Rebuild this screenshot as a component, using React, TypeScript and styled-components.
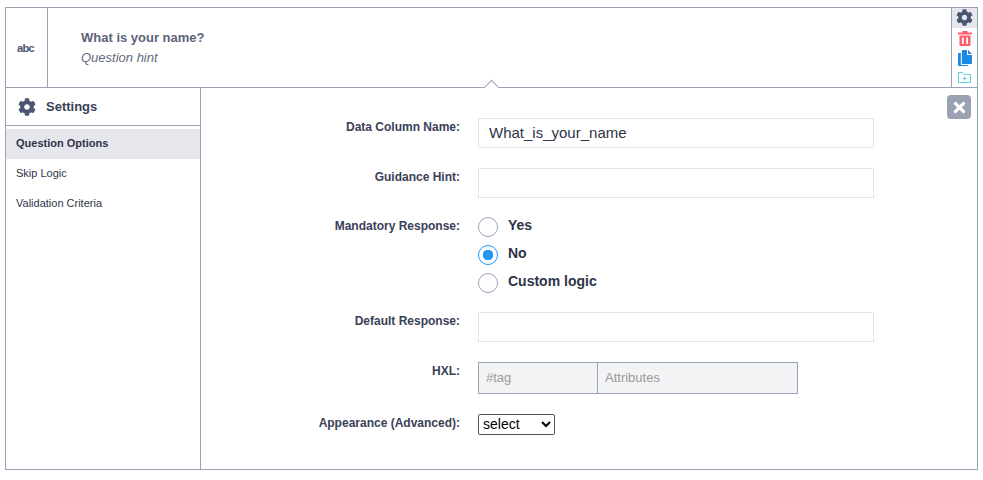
import React from "react";
import styled, { createGlobalStyle } from "styled-components";
import { FaCog, FaTimes } from "react-icons/fa";

const GlobalStyle = createGlobalStyle`
  html, body {
    margin: 0;
    background: #fff;
    font-family: "Liberation Sans", Arial, sans-serif;
  }
`;

const menuItems = ["Question Options", "Skip Logic", "Validation Criteria"];
const radioOptions = [
  { label: "Yes", checked: false },
  { label: "No", checked: true },
  { label: "Custom logic", checked: false },
];

const TrashIcon = () => (
  <svg width="14" height="15" viewBox="0 0 14 15" fill="currentColor">
    <path d="M4.5 0h5v1.5H14v2H0v-2h4.5z" />
    <path
      fillRule="evenodd"
      d="M1.5 4.5h11V14a1 1 0 0 1-1 1h-9a1 1 0 0 1-1-1zM4 6.5V13h1.7V6.5zM8.3 6.5V13H10V6.5z"
    />
  </svg>
);

const CopyIcon = () => (
  <svg width="14" height="16" viewBox="0 0 14 16" fill="currentColor">
    <path d="M4.8 0H9v5h5v8a1 1 0 0 1-1 1H4.8a1 1 0 0 1-1-1V1a1 1 0 0 1 1-1z" />
    <path d="M10 0l4 4h-4z" />
    <path d="M2.8 3H1a1 1 0 0 0-1 1v11a1 1 0 0 0 1 1h8.5a1 1 0 0 0 1-1h-7a.7.7 0 0 1-.7-.7z" />
  </svg>
);

const FolderPlusIcon = () => (
  <svg
    width="13"
    height="11"
    viewBox="0 0 13 11"
    fill="none"
    stroke="currentColor"
    strokeWidth="1"
  >
    <path d="M.5 10.5V.5h4l1.5 2h6.5v8z" />
    <path d="M6.5 4.5v4M4.5 6.5h4" />
  </svg>
);

export default function App() {
  return (
    <Page>
      <GlobalStyle />
      <Card>
        <QuestionRow>
          <TypeCell>abc</TypeCell>
          <QuestionBody>
            <QuestionTitle>What is your name?</QuestionTitle>
            <QuestionHint>Question hint</QuestionHint>
          </QuestionBody>
          <ToolColumn>
            <ToolButton active color="#4b5470">
              <FaCog size={17} />
            </ToolButton>
            <ToolButton color="#ff5c6c">
              <TrashIcon />
            </ToolButton>
            <ToolButton color="#1e88e5">
              <CopyIcon />
            </ToolButton>
            <ToolButton color="#5fd0dc">
              <FolderPlusIcon />
            </ToolButton>
          </ToolColumn>
          <Caret />
        </QuestionRow>
        <SettingsRow>
          <Sidebar>
            <SidebarHeader>
              <FaCog />
              <span>Settings</span>
            </SidebarHeader>
            <Menu>
              {menuItems.map((item, i) => (
                <MenuItem key={item} active={i === 0}>
                  {item}
                </MenuItem>
              ))}
            </Menu>
          </Sidebar>
          <Main>
            <CloseButton>
              <FaTimes />
            </CloseButton>
            <Form>
              <Label>Data Column Name:</Label>
              <TextInput defaultValue="What_is_your_name" />
              <Label>Guidance Hint:</Label>
              <TextInput />
              <RadioGroupLabel>Mandatory Response:</RadioGroupLabel>
              <RadioGroup>
                {radioOptions.map((opt) => (
                  <RadioRow key={opt.label}>
                    <RadioCircle checked={opt.checked} />
                    <RadioLabel>{opt.label}</RadioLabel>
                  </RadioRow>
                ))}
              </RadioGroup>
              <Label>Default Response:</Label>
              <TextInput />
              <Label>HXL:</Label>
              <HxlGroup>
                <HxlTag placeholder="#tag" />
                <HxlAttributes placeholder="Attributes" />
              </HxlGroup>
              <Label>Appearance (Advanced):</Label>
              <Select defaultValue="select">
                <option value="select">select</option>
              </Select>
            </Form>
          </Main>
        </SettingsRow>
      </Card>
    </Page>
  );
}

const Page = styled.div`
  padding: 7px 5px 10px;
  box-sizing: border-box;
  width: 983px;
`;

const Card = styled.div`
  border: 1px solid #9aa1b3;
  height: 463px;
  width: 973px;
  display: flex;
  flex-direction: column;
  box-sizing: border-box;
`;

const QuestionRow = styled.div`
  position: relative;
  height: 80px;
  flex: none;
  display: flex;
  box-sizing: border-box;
  border-bottom: 1px solid #9aa1b3;
`;

const TypeCell = styled.div`
  width: 41px;
  flex: none;
  border-right: 1px solid #9aa1b3;
  box-sizing: content-box;
  display: flex;
  align-items: center;
  justify-content: center;
  padding-right: 0;
  font-size: 11px;
  font-weight: bold;
  color: #4b5470;
  letter-spacing: -0.7px;
  text-indent: -2px;
`;

const QuestionBody = styled.div`
  flex: 1;
  padding: 21px 33px 0;
`;

const QuestionTitle = styled.div`
  font-size: 13px;
  font-weight: bold;
  line-height: 18px;
  color: #5c637a;
`;

const QuestionHint = styled.div`
  font-size: 13px;
  font-style: italic;
  line-height: 20px;
  margin-top: 1px;
  color: #636a80;
`;

const ToolColumn = styled.div`
  width: 25px;
  flex: none;
  border-left: 1px solid #9aa1b3;
  display: flex;
  flex-direction: column;
`;

const ToolButton = styled.div<{ active?: boolean; color: string }>`
  box-sizing: border-box;
  height: 20px;
  padding-top: ${({ active }) => (active ? 0 : 1)}px;
  display: flex;
  align-items: center;
  justify-content: center;
  background: ${({ active }) => (active ? "#e6e7ec" : "transparent")};
  color: ${({ color }) => color};
`;

const Caret = styled.div`
  position: absolute;
  left: 480px;
  bottom: -6px;
  width: 10px;
  height: 10px;
  background: #fff;
  border-left: 1px solid #9aa1b3;
  border-top: 1px solid #9aa1b3;
  transform: rotate(45deg);
`;

const SettingsRow = styled.div`
  flex: 1;
  display: flex;
  min-height: 0;
`;

const Sidebar = styled.div`
  width: 194px;
  flex: none;
  border-right: 1px solid #9aa1b3;
`;

const SidebarHeader = styled.div`
  height: 37px;
  border-bottom: 1px solid #9aa1b3;
  display: flex;
  align-items: center;
  gap: 10px;
  padding-left: 12px;
  font-size: 13px;
  font-weight: bold;
  color: #3a4058;

  svg {
    font-size: 18px;
    color: #4b5470;
  }
`;

const Menu = styled.div`
  padding-top: 3px;
`;

const MenuItem = styled.div<{ active?: boolean }>`
  height: 30px;
  line-height: 28px;
  padding-left: 10px;
  font-size: 11px;
  font-weight: ${({ active }) => (active ? "bold" : "normal")};
  color: #2f3447;
  background: ${({ active }) => (active ? "#e6e7ec" : "transparent")};
`;

const Main = styled.div`
  position: relative;
  flex: 1;
`;

const CloseButton = styled.div`
  position: absolute;
  top: 7px;
  right: 6px;
  width: 24px;
  height: 24px;
  border-radius: 4px;
  background: #9aa1b3;
  color: #fff;
  display: flex;
  align-items: center;
  justify-content: center;
  font-size: 17px;
`;

const Form = styled.div`
  display: grid;
  grid-template-columns: 259px 396px;
  column-gap: 18px;
  row-gap: 20px;
  padding-top: 30px;
  align-items: start;
`;

const Label = styled.div`
  font-size: 12px;
  font-weight: bold;
  line-height: 14px;
  color: #3a4058;
  text-align: right;
  padding-top: 2px;
`;

const RadioGroupLabel = styled(Label)`
  padding-top: 1px;
`;

const TextInput = styled.input`
  box-sizing: border-box;
  height: 30px;
  width: 396px;
  border: 1px solid #e2e4ea;
  padding: 0 10px 2px;
  font-family: inherit;
  font-size: 15px;
  color: #2f3447;
  outline: none;
`;

const RadioGroup = styled.div`
  display: flex;
  flex-direction: column;
  gap: 8px;
  margin-top: -3px;
  padding-bottom: 1px;
`;

const RadioRow = styled.div`
  display: flex;
  height: 20px;
  gap: 10px;
`;

const RadioCircle = styled.div<{ checked: boolean }>`
  box-sizing: border-box;
  width: 20px;
  height: 20px;
  margin-top: 2px;
  border-radius: 50%;
  background: ${({ checked }) =>
    checked ? "radial-gradient(circle, #2196f3 0 5px, #fff 5.5px)" : "#fff"};
  border: 1px solid ${({ checked }) => (checked ? "#2196f3" : "#9aa1b3")};
`;

const RadioLabel = styled.span`
  font-size: 14px;
  font-weight: bold;
  line-height: 16px;
  margin-top: 2px;
  color: #2f3447;
`;

const HxlGroup = styled.div`
  display: flex;
  width: 320px;
  height: 32px;
  box-sizing: border-box;
  border: 1px solid #9aa1b3;
  background: #f2f3f5;
`;

const HxlTag = styled.input`
  box-sizing: border-box;
  width: 119px;
  border: none;
  border-right: 1px solid #9aa1b3;
  background: transparent;
  padding: 0 7px 2px;
  font-family: inherit;
  font-size: 13px;
  outline: none;

  &::placeholder {
    color: #9a9a9a;
    opacity: 1;
  }
`;

const HxlAttributes = styled(HxlTag)`
  flex: 1;
  width: auto;
  min-width: 0;
  border-right: none;
`;

const Select = styled.select`
  justify-self: start;
  width: 77px;
  height: 21px;
  padding-bottom: 2px;
  font-family: "Liberation Sans", Arial, sans-serif;
  font-size: 14px;
  color: #000;
  background: #fff;
  border: 1px solid #555;
  border-radius: 2px;
`;
